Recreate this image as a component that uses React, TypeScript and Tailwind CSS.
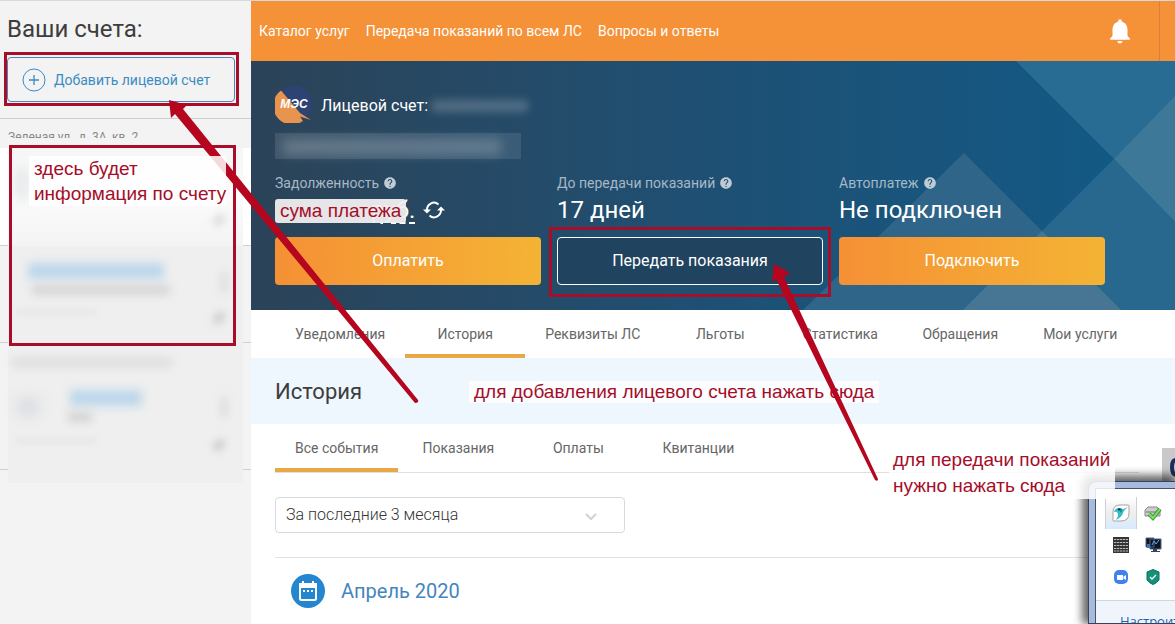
import { useState } from "react";
import { MdHelp, MdNotifications } from "react-icons/md";

const NAV = ["Каталог услуг", "Передача показаний по всем ЛС", "Вопросы и ответы"];
const TABS = ["Уведомления", "История", "Реквизиты ЛС", "Льготы", "Статистика", "Обращения", "Мои услуги"];
const FILTERS = ["Все события", "Показания", "Оплаты", "Квитанции"];

function TabRow({ items, initial }: { items: string[]; initial: string }) {
  const [active, setActive] = useState(initial);
  return (
    <div className="flex">
      {items.map((item) => (
        <button
          key={item}
          type="button"
          onClick={() => setActive(item)}
          className={`h-12 min-w-[120px] whitespace-nowrap border-b-4 px-5 pt-1 text-sm text-[#666] ${
            active === item ? "border-[#e9a844]" : "border-transparent"
          }`}
        >
          {item}
        </button>
      ))}
    </div>
  );
}

function StatLabel({ children }: { children: string }) {
  return (
    <div className="flex h-5 items-center gap-1 text-sm text-[#a6b8c6]">
      {children}
      <MdHelp size={14} className="text-[#bfcbd5]" />
    </div>
  );
}

function SyncIcon() {
  return (
    <svg width="22" height="20" viewBox="0 0 22 20" fill="none" stroke="#fff" strokeWidth="2" aria-hidden="true">
      <path d="M4 11A7 7.500 0 0 1 15.500 4.500" />
      <path d="M18 9A7 7.500 0 0 1 6.500 15.500" />
      <path d="M0 9.500h8l-4 4z" fill="#fff" stroke="none" />
      <path d="M14 10.500h8l-4-4z" fill="#fff" stroke="none" />
    </svg>
  );
}

function Logo() {
  return (
    <svg width="38" height="38" viewBox="0 0 38 38" aria-label="МЭС">
      <circle cx="19" cy="18.500" r="18" fill="#2d4373" />
      <path d="M6 5.500L25 28L36 35L25 31.500L28 36A18.500 18.500 0 0 1 6 5.500Z" fill="#e8944f" />
      <text x="19" y="23" textAnchor="middle" fill="#fff" fontFamily="Liberation Sans, sans-serif" fontSize="12" fontWeight="700" fontStyle="italic">
        МЭС
      </text>
    </svg>
  );
}

function CalendarIcon() {
  return (
    <svg width="34" height="34" viewBox="0 0 34 34" aria-hidden="true">
      <circle cx="17" cy="17" r="17" fill="#2386cf" />
      <rect x="9" y="10" width="16" height="16" rx="1.500" fill="none" stroke="#fff" strokeWidth="2" />
      <path d="M8 9h18v5H8zM11 7h2v3h-2zM21 7h2v3h-2z" fill="#fff" />
      <path d="M12 17h2M16 17h2M20 17h2" stroke="#fff" strokeWidth="2" />
    </svg>
  );
}

function BlurredAccounts() {
  return (
    <>
      <div className="mt-3 ml-2 h-[7px] overflow-hidden whitespace-nowrap text-xs leading-3 text-[#888]">
        Зеленая ул., д. 3А, кв. 2
      </div>
      <div className="relative mt-2.5 h-[98px] border-b border-[#d0d0d0] bg-white">
        <div className="absolute inset-x-2 top-0 h-[98px] bg-gradient-to-b from-[#f6f6f6] via-[#fbfbfb] to-[#f4f4f4]" />
        <div className="absolute top-5 left-4 h-8 w-3 bg-[#e3e6e8] blur-[6px]" />
        <div className="absolute top-[66px] left-[216px] h-3 w-1.5 rotate-45 bg-[#ccc] blur-[4px]" />
      </div>
      <div className="relative h-[97px] border-b border-[#d0d0d0]">
        <div className="absolute inset-x-2 top-0 h-[97px] bg-[#efefef]" />
        <div className="absolute top-[17px] left-7 h-4 w-[136px] bg-[#bcd7ea] blur-[5px]" />
        <div className="absolute top-10 left-8 h-2 w-[138px] bg-[#cfcfcf] blur-[5px]" />
        <div className="absolute top-16 left-4 h-1 w-20 bg-[#e3e3e3] blur-[3px]" />
        <div className="absolute top-[26px] left-[222px] h-5 w-1 bg-[#d0d0d0] blur-[4px]" />
        <div className="absolute top-[66px] left-[216px] h-3 w-1.5 rotate-45 bg-[#bbb] blur-[4px]" />
      </div>
      <div className="relative h-[127px] border-b border-[#d0d0d0]">
        <div className="absolute inset-x-2 top-0 h-[140px] bg-[#efefef]" />
        <div className="absolute top-4 left-3 h-[7px] w-40 bg-[#d8d8d8] blur-[5px]" />
        <div className="absolute top-[47px] left-[70px] h-4 w-[72px] bg-[#bcd7ea] blur-[5px]" />
        <div className="absolute top-[70px] left-[68px] h-2 w-6 bg-[#ccc] blur-[5px]" />
        <div className="absolute top-[54px] left-4 h-5 w-6 bg-[#dde0e4] blur-[6px]" />
        <div className="absolute top-24 left-4 h-1 w-20 bg-[#e3e3e3] blur-[3px]" />
        <div className="absolute top-[54px] left-[222px] h-5 w-1 bg-[#d0d0d0] blur-[4px]" />
        <div className="absolute top-24 left-[216px] h-3 w-1.5 rotate-45 bg-[#bbb] blur-[4px]" />
      </div>
    </>
  );
}

function Sidebar() {
  return (
    <aside className="w-[251px] shrink-0 bg-[#f3f3f3]">
      <div className="border-b border-[#cfcfcf] pt-3 pb-4 pl-[7px]">
        <h2 className="text-2xl leading-8 text-[#3d3d3d]">Ваши счета:</h2>
        <button
          type="button"
          className="mt-3 flex h-[45px] w-[228px] items-center gap-2 rounded-[4px] border border-[#4d87b5] pl-[14px] text-sm text-[#3a8cc4]"
        >
          <svg width="24" height="24" viewBox="0 0 24 24" fill="none" stroke="#3a8cc4" aria-hidden="true">
            <circle cx="12" cy="12" r="11" />
            <path d="M7 12h10M12 7v10" strokeWidth="1.300" />
          </svg>
          Добавить лицевой счет
        </button>
      </div>
      <BlurredAccounts />
    </aside>
  );
}

function Hero() {
  return (
    <section className="relative overflow-hidden bg-gradient-to-r from-[#2b4358] via-[#1e5074] to-[#0f5a87] px-6 pt-6 pb-[25px] text-white">
      <svg className="absolute top-0 right-0" width="924" height="249" viewBox="0 0 924 249" aria-hidden="true">
        <path d="M765 0H924V161L863 98Z" fill="#286c94" />
        <path d="M863 98L924 35V161Z" fill="#3d7898" />
        <path d="M863 98L924 161V249H694L633 249L791 170Z" fill="#28688f" />
        <path d="M713 92L791 170L712 249H552Z" fill="#30658a" />
        <path d="M791 170L870 249H712Z" fill="#477594" />
      </svg>
      <div className="relative">
        <div className="flex h-[38px] items-center gap-2">
          <Logo />
          <span className="pt-1 text-base">Лицевой счет:</span>
          <span className="-ml-1 mt-1 h-3 w-24 bg-white/20 blur-[4px]" />
        </div>
        <div className="mt-2.5 h-[26px] w-[246px] bg-white/10 py-1.5 pr-5 pl-2">
          <div className="h-4 bg-white/20 blur-[6px]" />
        </div>
        <div className="mt-3.5 grid max-w-[830px] grid-cols-3 gap-4">
          <div>
            <StatLabel>Задолженность</StatLabel>
            <div className="relative flex h-[34px] items-center gap-2 pl-24 text-2xl">
              <span className="underline decoration-dashed decoration-2 underline-offset-4">руб.</span>
              <SyncIcon />
              <span className="absolute top-1.5 left-0 h-6 rounded-[3px] bg-[#f0eeee]/95 px-[5px] font-[Liberation_Sans,sans-serif] text-[19px] leading-6 text-[#a50d29]">
                сума платежа
              </span>
            </div>
            <button type="button" className="mt-2.5 h-12 w-full rounded-[4px] bg-gradient-to-r from-[#f59035] to-[#f4b334] text-base">
              Оплатить
            </button>
          </div>
          <div>
            <StatLabel>До передачи показаний</StatLabel>
            <div className="flex h-[34px] items-center text-2xl">17 дней</div>
            <div className="relative mt-2.5">
              <button type="button" className="h-12 w-full rounded-[4px] border border-white bg-[#20435f] text-base">
                Передать показания
              </button>
              <div className="pointer-events-none absolute -inset-x-2 -top-2.5 -bottom-3 border-3 border-[#a80e2a]" />
            </div>
          </div>
          <div>
            <StatLabel>Автоплатеж</StatLabel>
            <div className="flex h-[34px] items-center text-2xl">Не подключен</div>
            <button type="button" className="mt-2.5 h-12 w-full rounded-[4px] bg-gradient-to-r from-[#f59035] to-[#f4b334] text-base">
              Подключить
            </button>
          </div>
        </div>
      </div>
    </section>
  );
}

function TrayPopup() {
  return (
    <div className="absolute top-[481px] right-0 h-[143px] w-[87px] rounded-tl-lg border border-r-0 border-[#35435c] bg-[#a9bbdd] pt-1.5 pl-1.5 shadow-[-3px_-3px_9px_3px_rgba(0,0,0,0.6)]">
      <div className="flex h-full flex-col border-t border-l border-[#42526f] bg-white font-[Open_Sans,sans-serif]">
        <div className="grid h-[111px] shrink-0 grid-cols-[32px_32px] grid-rows-[32px_32px_32px] place-items-center pt-2 pl-[9px]">
          <div className="grid h-8 w-8 place-items-center border-x border-[#d0d0d0] bg-gradient-to-b from-white via-[#eeeeee] to-[#d8eaff]">
            <svg width="18" height="18" viewBox="0 0 18 18" aria-hidden="true">
              <path d="M8 1h8q1 0 1 1v7q0 8-8 8H2q-1 0-1-1V8q0-7 7-7z" fill="#fff" stroke="#a5a5a5" />
              <path d="M2 8Q3 4 7 4Q9 4 10.500 5.500L16 3Q12 6 11 9Q10 13 4 16Q7 12 5.500 9Q4.500 7 2 8Z" fill="#38bccb" />
              <path d="M5 5Q8 3 10.500 5.500L9 9Q8 6 5 5Z" fill="#1689a0" />
              <circle cx="7" cy="5.500" r="1" fill="#123" />
            </svg>
          </div>
          <svg width="18" height="18" viewBox="0 0 18 18" aria-hidden="true">
            <path d="M4 3h9l3 4v5H1V6z" fill="#ccc" stroke="#888" />
            <path d="M2 8h13" stroke="#777" />
            <path d="M5 10L9 14L16 5" fill="none" stroke="#3a9e35" strokeWidth="4" />
            <path d="M5 10L9 14L16 5" fill="none" stroke="#84dc6c" strokeWidth="2" />
          </svg>
          <svg width="16" height="16" viewBox="0 0 16 16" aria-hidden="true">
            <path d="M0 0h16v16H0z" fill="#353535" />
            <path d="M1 2.500h14M1 5.500h14M1 8.500h14M1 11.500h14M1 14h14" stroke="#bdbdbd" />
            <path d="M3.500 1v14M6.500 1v14M9.500 1v14M12.500 1v14" stroke="#353535" strokeWidth=".7" />
          </svg>
          <svg width="17" height="16" viewBox="0 0 17 16" aria-hidden="true">
            <path d="M1 1h8v9H1zM5 2h11v10H5z" fill="#0c1424" stroke="#52647e" />
            <path d="M7 8l2-4 2 3 3-4" fill="none" stroke="#6da7e0" />
            <path d="M2 7h3v4H2z" fill="#3974c0" />
            <path d="M8 12h4v2h3v1H6v-1h2z" fill="#34465f" />
          </svg>
          <svg width="16" height="16" viewBox="0 0 16 16" aria-hidden="true">
            <rect x="1" y="1" width="14" height="14" rx="5" fill="#3f82ef" />
            <path d="M4 6h6v5H5q-1 0-1-1zM10.500 7.500L13 6v5l-2.500-1.500z" fill="#fff" />
          </svg>
          <svg width="14" height="16" viewBox="0 0 14 16" aria-hidden="true">
            <path d="M7 .5L13 3V11Q11 14 7 15.500Q3 14 1 11V3Z" fill="#159179" stroke="#087260" />
            <path d="M4 8l2 2 4-4" fill="none" stroke="#fff" strokeWidth="1.300" />
          </svg>
        </div>
        <div className="flex-1 overflow-hidden border-t border-[#ccd8e8] bg-[#f0f5fc] pt-3 pl-6 text-[13px] leading-4 whitespace-nowrap text-[#1764b4]">
          <a href="#tray">Настроить...</a>
        </div>
      </div>
    </div>
  );
}

/** Red frames, arrows and notes laid over the page. */
function Annotations() {
  const note = "absolute whitespace-nowrap font-[Liberation_Sans,sans-serif] text-[19px] text-[#a50d29]";
  return (
    <div className="pointer-events-none absolute inset-0">
      <div className="absolute top-[52px] left-1 h-[54px] w-[235px] border-3 border-[#a80e2a]" />
      <div className="absolute top-[145px] left-[9px] h-[201px] w-[227px] border-3 border-[#a80e2a]" />
      <div className={`${note} top-[381px] left-[469px] bg-white/80 px-[5px] leading-[22px]`}>
        для добавления лицевого счета нажать сюда
      </div>
      <svg className="absolute top-0 left-0" width="900" height="500" viewBox="0 0 900 500" aria-hidden="true">
        <path d="M169 100L187 105L183 109L418 400Q419 403 415 403L175 114L171 118Z" fill="#b5051f" />
        <path d="M774 264L790 273L784 277L878 479Q878 482 875 480L776 279L772 282Z" fill="#b5051f" />
      </svg>
      <div className={`${note} top-[156px] left-[29px] bg-white/85 pl-[5px] leading-[25px]`}>
        здесь будет
        <br />
        информация по счету
      </div>
      <div className={`${note} top-[447px] left-[889px] w-[226px] bg-white/85 pl-1 leading-[26px]`}>
        для передачи показаний
        <br />
        нужно нажать сюда
      </div>
    </div>
  );
}

export default function App() {
  return (
    <div className="relative flex min-h-screen flex-col overflow-hidden bg-white font-[Roboto,sans-serif]">
      <div className="h-px shrink-0 bg-[#d8d8d8]" />
      <div className="flex flex-1">
        <Sidebar />
        <main className="min-w-0 flex-1">
          <header className="flex h-[60px] items-center bg-[#f59136] pl-2 text-sm text-white">
            <nav className="flex flex-1 gap-4">
              {NAV.map((item) => (
                <a key={item} href="#nav" className="whitespace-nowrap">
                  {item}
                </a>
              ))}
            </nav>
            <button type="button" aria-label="Оповещения" className="mr-6">
              <MdNotifications size={30} />
            </button>
            <div className="h-full w-4 border-l border-[#d98138]" />
          </header>
          <Hero />
          <div className="pl-6">
            <TabRow items={TABS} initial="История" />
          </div>
          <div className="flex h-[66px] items-center bg-[#eef6fe] pl-6">
            <h1 className="text-[22px] text-[#3d3d3d]">История</h1>
          </div>
          <div className="mx-6 mr-9 border-b border-[#dfdfdf]">
            <TabRow items={FILTERS} initial="Все события" />
          </div>
          <div className="relative mt-6 ml-6 w-[350px]">
            <select
              aria-label="Период"
              className="h-9 w-full appearance-none rounded-[4px] border border-[#d5dade] bg-white px-2.5 text-base font-light text-[#333]"
            >
              <option>За последние 3 месяца</option>
            </select>
            <svg className="pointer-events-none absolute top-4 right-7" width="12" height="8" viewBox="0 0 12 8" fill="none" stroke="#cdd2d6" strokeWidth="2" aria-hidden="true">
              <path d="M1 1l5 5 5-5" />
            </svg>
          </div>
          <div className="mt-6 ml-6 flex items-center gap-4 border-t border-[#e2e2e2] px-4 py-4">
            <CalendarIcon />
            <h3 className="text-xl text-[#4385bd]">Апрель 2020</h3>
          </div>
        </main>
      </div>
      <div className="absolute top-[448px] right-0 h-[34px] w-[13px] bg-[#c9c9c9]">
        <svg width="13" height="34" viewBox="0 0 13 34" fill="none" stroke="#17315c" strokeWidth="4" aria-hidden="true">
          <path d="M15 12Q10 11 10 19Q10 27 15 27" />
        </svg>
      </div>
      <TrayPopup />
      <Annotations />
    </div>
  );
}
